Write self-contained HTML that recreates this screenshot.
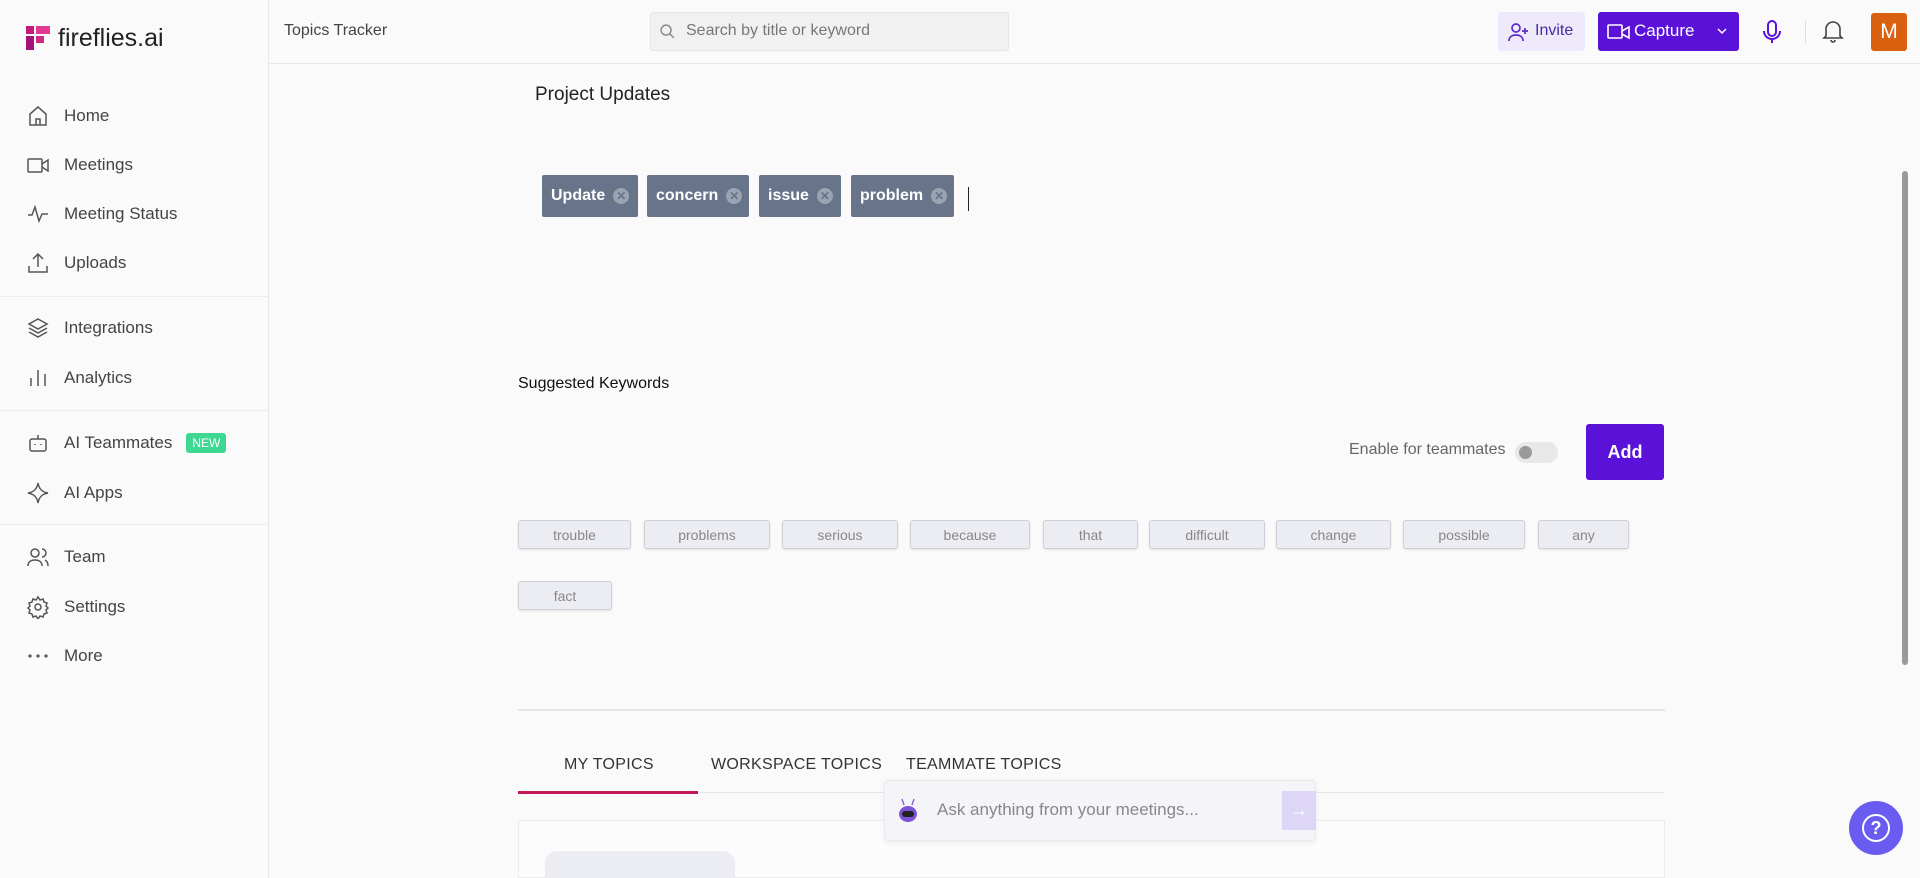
<!DOCTYPE html>
<html><head><meta charset="utf-8"><style>
*{box-sizing:border-box;margin:0;padding:0}
body{width:1920px;height:878px;overflow:hidden;background:#fafafa;font-family:"Liberation Sans",sans-serif;color:#222;position:relative}
.abs{position:absolute}
.side{left:0;top:0;width:269px;height:878px;border-right:1px solid #e8e8e8;background:#fafafa}
.nav{position:absolute;left:26px;display:flex;align-items:center;font-size:17px;color:#444}
.nav svg{width:24px;height:24px;margin-right:14px;stroke:#555;fill:none;stroke-width:1.5}
.hdiv{position:absolute;left:0;width:269px;height:1px;background:#ececec}
.tag{position:absolute;top:175px;height:42px;background:#67748a;color:#fff;font-size:16px;font-weight:bold;display:flex;align-items:center;padding-left:9px;border-radius:2px}
.tag i{display:inline-block;width:16px;height:16px;border-radius:50%;background:#9aa3b2;margin-left:8px;color:#67748a;font-style:normal;font-size:12px;line-height:16px;text-align:center}
.kw{position:absolute;top:520px;height:29px;border:1px solid #cfcfd8;background:#ececf3;border-radius:3px;font-size:14px;color:#888;display:flex;align-items:center;justify-content:center;box-shadow:0 1px 2px rgba(0,0,0,.1)}
.tab{position:absolute;top:756px;font-size:16px;letter-spacing:.3px;color:#333}
</style></head><body>
<div class="abs side"></div>
<div class="abs" style="left:269px;top:63px;width:1651px;height:1px;background:#e8e8e8"></div>
<!-- logo -->
<svg class="abs" style="left:26px;top:26px" width="24" height="24" viewBox="0 0 24 24"><rect x="0" y="0" width="8" height="8" fill="#c21b7a"/><rect x="10" y="0" width="14" height="8" fill="#e0398f"/><rect x="0" y="10" width="8" height="14" fill="#a3137a"/><rect x="10" y="10" width="8" height="7" fill="#d22a80"/></svg>
<div class="abs" style="left:58px;top:24px;font-size:25px;color:#222">fireflies.ai</div>
<div class="abs" style="left:284px;top:22px;font-size:16px;color:#444">Topics Tracker</div>
<div class="abs" style="left:650px;top:12px;width:359px;height:39px;background:#f1f1f1;border:1px solid #e6e6e6;border-radius:3px"></div>
<svg class="abs" style="left:659px;top:23px" width="17" height="17" viewBox="0 0 24 24" fill="none" stroke="#888" stroke-width="2"><circle cx="10" cy="10" r="7"/><path d="M15 15l6 6"/></svg>
<div class="abs" style="left:686px;top:22px;font-size:16px;color:#777">Search by title or keyword</div>
<!-- header right -->
<div class="abs" style="left:1498px;top:12px;width:87px;height:39px;background:#efeafb;border-radius:3px"></div>
<svg class="abs" style="left:1507px;top:20px" width="24" height="24" viewBox="0 0 24 24" fill="none" stroke="#5b2bc7" stroke-width="1.7"><circle cx="9" cy="8" r="4"/><path d="M2 21c0-4 3-6 7-6s7 2 7 6M18 8v6M15 11h6"/></svg>
<div class="abs" style="left:1535px;top:22px;font-size:16px;color:#4a2aa0">Invite</div>
<div class="abs" style="left:1598px;top:12px;width:141px;height:39px;background:#5a12d8;border-radius:3px"></div>
<svg class="abs" style="left:1607px;top:21px" width="24" height="22" viewBox="0 0 24 22" fill="none" stroke="#fff" stroke-width="1.6"><rect x="1" y="4" width="14" height="13" rx="1"/><path d="M15 10l7-4v11l-7-4"/></svg>
<div class="abs" style="left:1634px;top:21px;font-size:17px;color:#fff">Capture</div>
<svg class="abs" style="left:1716px;top:26px" width="12" height="10" viewBox="0 0 12 10" fill="none" stroke="#fff" stroke-width="1.5"><path d="M2 3l4 4 4-4"/></svg>
<svg class="abs" style="left:1762px;top:19px" width="20" height="26" viewBox="0 0 20 26" fill="none" stroke="#5a12d8" stroke-width="2"><rect x="6" y="2" width="8" height="15" rx="4"/><path d="M2 12c0 5 4 8 8 8s8-3 8-8M10 20v4"/></svg>
<div class="abs" style="left:1805px;top:20px;width:1px;height:24px;background:#e0e0e0"></div>
<svg class="abs" style="left:1822px;top:19px" width="22" height="24" viewBox="0 0 22 24" fill="none" stroke="#444" stroke-width="1.6"><path d="M4 17V10a7 7 0 0114 0v7l2 2H2z M9 21a2 2 0 004 0"/></svg>
<div class="abs" style="left:1871px;top:13px;width:36px;height:38px;background:#d9600f;border-radius:3px;color:#fff;font-size:21px;text-align:center;line-height:38px">M</div>
<!-- nav -->
<div class="nav" style="top:104px"><svg viewBox="0 0 24 24"><path d="M4 21V10l8-7 8 7v11zM10 21v-6h4v6"/></svg>Home</div>
<div class="nav" style="top:153px"><svg viewBox="0 0 24 24"><rect x="2" y="6" width="14" height="13" rx="1"/><path d="M16 11l6-4v11l-6-4"/></svg>Meetings</div>
<div class="nav" style="top:202px"><svg viewBox="0 0 24 24"><path d="M2 13h4l3-8 4 14 3-7h6"/></svg>Meeting Status</div>
<div class="nav" style="top:251px"><svg viewBox="0 0 24 24"><path d="M12 16V3M7 8l5-5 5 5M3 15v6h18v-6"/></svg>Uploads</div>
<div class="hdiv" style="top:296px"></div>
<div class="nav" style="top:316px"><svg viewBox="0 0 24 24"><path d="M12 3l9 5-9 5-9-5zM3 12l9 5 9-5M3 16l9 5 9-5"/></svg>Integrations</div>
<div class="nav" style="top:366px"><svg viewBox="0 0 24 24"><path d="M5 20v-8M12 20V4M19 20v-12"/></svg>Analytics</div>
<div class="hdiv" style="top:410px"></div>
<div class="nav" style="top:431px"><svg viewBox="0 0 24 24"><rect x="4" y="8" width="16" height="12" rx="2"/><path d="M12 8V4M9 13v1M15 13v1"/></svg>AI Teammates<span style="margin-left:14px;background:#3fd893;color:#fff;font-size:12px;padding:3px 6px;border-radius:3px">NEW</span></div>
<div class="nav" style="top:481px"><svg viewBox="0 0 24 24"><path d="M12 2c1 6 4 9 10 10-6 1-9 4-10 10-1-6-4-9-10-10 6-1 9-4 10-10z"/></svg>AI Apps</div>
<div class="hdiv" style="top:524px"></div>
<div class="nav" style="top:545px"><svg viewBox="0 0 24 24"><circle cx="9" cy="8" r="4"/><path d="M2 21c0-4 3-6 7-6s7 2 7 6M16 4a4 4 0 010 8M19 15c2 1 3 3 3 6"/></svg>Team</div>
<div class="nav" style="top:595px"><svg viewBox="0 0 24 24"><circle cx="12" cy="12" r="3"/><path d="M12 2l2 3 3-1 1 3 3 1-1 3 2 2-2 2 1 3-3 1-1 3-3-1-2 3-2-3-3 1-1-3-3-1 1-3-2-2 2-2-1-3 3-1 1-3 3 1z"/></svg>Settings</div>
<div class="nav" style="top:644px"><svg viewBox="0 0 24 24" style="fill:#555;stroke:none"><circle cx="4" cy="12" r="1.6"/><circle cx="12" cy="12" r="1.6"/><circle cx="20" cy="12" r="1.6"/></svg>More</div>
<!-- content -->
<div class="abs" style="left:535px;top:84px;font-size:19px;color:#222">Project Updates</div>
<div class="tag" style="left:542px;width:96px">Update<i>✕</i></div>
<div class="tag" style="left:647px;width:102px">concern<i>✕</i></div>
<div class="tag" style="left:759px;width:82px">issue<i>✕</i></div>
<div class="tag" style="left:851px;width:103px">problem<i>✕</i></div>
<div class="abs" style="left:968px;top:187px;width:1px;height:24px;background:#222"></div>
<div class="abs" style="left:518px;top:375px;font-size:16px;color:#111">Suggested Keywords</div>
<div class="abs" style="left:1349px;top:441px;font-size:16px;color:#666">Enable for teammates</div>
<div class="abs" style="left:1515px;top:442px;width:43px;height:21px;background:#e8e8e8;border-radius:11px"></div>
<div class="abs" style="left:1519px;top:446px;width:13px;height:13px;background:#999;border-radius:50%"></div>
<div class="abs" style="left:1586px;top:424px;width:78px;height:56px;background:#5a12d8;border-radius:3px;color:#fff;font-size:18px;font-weight:bold;text-align:center;line-height:56px">Add</div>
<div class="kw" style="left:518px;width:113px">trouble</div>
<div class="kw" style="left:644px;width:126px">problems</div>
<div class="kw" style="left:782px;width:116px">serious</div>
<div class="kw" style="left:910px;width:120px">because</div>
<div class="kw" style="left:1043px;width:95px">that</div>
<div class="kw" style="left:1149px;width:116px">difficult</div>
<div class="kw" style="left:1276px;width:115px">change</div>
<div class="kw" style="left:1403px;width:122px">possible</div>
<div class="kw" style="left:1538px;width:91px">any</div>
<div class="kw" style="left:518px;top:581px;width:94px">fact</div>
<div class="abs" style="left:518px;top:709px;width:1147px;height:2px;background:#e6e6e6"></div>
<div class="tab" style="left:564px">MY TOPICS</div>
<div class="tab" style="left:711px">WORKSPACE TOPICS</div>
<div class="tab" style="left:906px">TEAMMATE TOPICS</div>
<div class="abs" style="left:518px;top:792px;width:1147px;height:1px;background:#e6e6e6"></div>
<div class="abs" style="left:518px;top:791px;width:180px;height:3px;background:#c2185b"></div>
<div class="abs" style="left:518px;top:820px;width:1147px;height:58px;border:1px solid #ececec;background:#fcfcfc"></div>
<div class="abs" style="left:545px;top:851px;width:190px;height:27px;background:#ececf3;border-radius:12px 12px 0 0"></div>
<div class="abs" style="left:884px;top:780px;width:432px;height:61px;background:#f5f4f8;border:1px solid #eaeaea;border-radius:4px;box-shadow:0 2px 6px rgba(0,0,0,.06)"></div>
<svg class="abs" style="left:897px;top:797px" width="22" height="26" viewBox="0 0 22 26"><path d="M7 8L5 2M15 8l2-6" stroke="#8e6bd8" stroke-width="1.5"/><ellipse cx="11" cy="17" rx="9" ry="8" fill="#7b55d6"/><rect x="5" y="14" width="12" height="6" rx="3" fill="#222"/></svg>
<div class="abs" style="left:937px;top:800px;font-size:17px;color:#888">Ask anything from your meetings...</div>
<div class="abs" style="left:1282px;top:791px;width:34px;height:39px;background:#ddd6f7;color:#fff;text-align:center;line-height:39px;font-size:18px">→</div>
<div class="abs" style="left:1849px;top:801px;width:54px;height:54px;border-radius:50%;background:#6a5cf0"></div>
<div class="abs" style="left:1862px;top:814px;width:28px;height:28px;border-radius:50%;border:2px solid #fff;color:#fff;font-size:18px;font-weight:bold;text-align:center;line-height:24px">?</div>
<div class="abs" style="left:1902px;top:171px;width:6px;height:494px;background:#9a9a9a;border-radius:3px"></div>
</body></html>
